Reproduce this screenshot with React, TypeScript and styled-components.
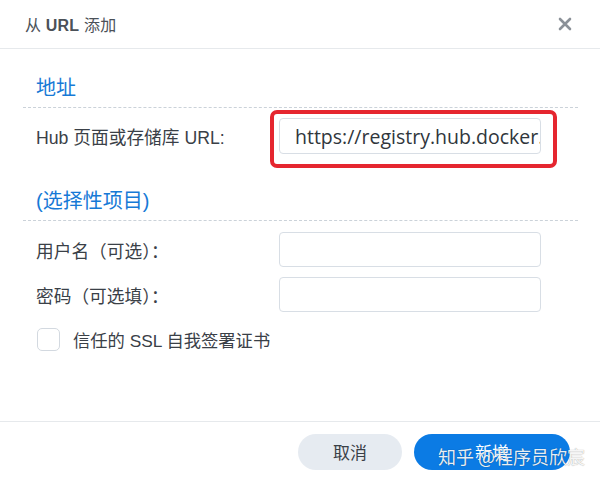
import React from 'react';
import styled, { createGlobalStyle } from 'styled-components';

const GlobalStyle = createGlobalStyle`
  html, body {
    margin: 0;
    padding: 0;
    background: #ffffff;
  }
  body {
    font-family: 'Liberation Sans', 'Noto Sans CJK SC', sans-serif;
    color: #3a4047;
  }
  * {
    box-sizing: border-box;
  }
`;

const Dialog = styled.div`
  position: relative;
  width: 600px;
  height: 482px;
  display: flex;
  flex-direction: column;
  background: #ffffff;
  overflow: hidden;
`;

const Header = styled.div`
  height: 49px;
  flex-shrink: 0;
  display: flex;
  align-items: center;
  justify-content: space-between;
  padding: 0 27px 0 25px;
  border-bottom: 1px solid #e6e9ec;
`;

const Title = styled.div`
  font-size: 16px;
  color: #4b5158;
  letter-spacing: 0.2px;

  b {
    font-weight: 700;
  }
`;

const CloseButton = styled.button`
  width: 16px;
  height: 16px;
  padding: 0;
  border: none;
  background: none;
  display: flex;
  align-items: center;
  justify-content: center;
  cursor: pointer;
`;

const Body = styled.div`
  flex: 1;
  padding: 0 22px 0 23px;
`;

const SectionTitle = styled.div<{ $top: number }>`
  margin-top: ${(p) => p.$top}px;
  padding: 0 0 7px 13px;
  font-size: 20px;
  line-height: 24px;
  color: #1679d6;
  border-bottom: 1px dashed #cbd2d9;
`;

const Row = styled.div<{ $top: number }>`
  margin-top: ${(p) => p.$top}px;
  display: grid;
  grid-template-columns: 243px 262px;
  align-items: center;
  padding-left: 13px;
`;

const Label = styled.label`
  font-size: 17.7px;
  color: #3a4047;
`;

const InputWrap = styled.div`
  position: relative;
`;

const TextInput = styled.input<{ $h: number }>`
  width: 262px;
  height: ${(p) => p.$h}px;
  border: 1px solid #d8dee5;
  border-radius: 4px;
  padding: 0 0 0 15px;
  font-family: 'Open Sans', 'Noto Sans CJK SC', sans-serif;
  font-size: 19.5px;
  color: #30363c;
  background: #ffffff;
  outline: none;
`;

const Highlight = styled.div`
  position: absolute;
  left: -9px;
  top: -8px;
  width: 287px;
  height: 58px;
  border: 4px solid #e5262f;
  border-radius: 7px;
  pointer-events: none;
`;

const CheckRow = styled.label`
  margin-top: 15px;
  display: flex;
  align-items: center;
  gap: 13px;
  padding-left: 14px;
  font-size: 17.3px;
  color: #3a4047;
`;

const CheckBox = styled.span`
  width: 23px;
  height: 23px;
  border: 1px solid #d3d9e0;
  border-radius: 5px;
  background: #ffffff;
`;

const Footer = styled.div`
  height: 61px;
  flex-shrink: 0;
  display: flex;
  align-items: center;
  justify-content: flex-end;
  gap: 12px;
  padding: 0 30px 1px 0;
  border-top: 1px solid #e6e9ec;
`;

const Button = styled.button<{ $primary?: boolean; $w: number }>`
  width: ${(p) => p.$w}px;
  height: 36px;
  border: none;
  border-radius: 18px;
  font-family: 'Liberation Sans', 'Noto Sans CJK SC', sans-serif;
  font-size: 17px;
  background: ${(p) => (p.$primary ? '#0b7be4' : '#e6ebf1')};
  color: ${(p) => (p.$primary ? '#ffffff' : '#3a4047')};
  cursor: pointer;
`;

const Watermark = styled.div`
  position: absolute;
  right: 15px;
  bottom: 13px;
  font-family: 'Noto Sans CJK SC', sans-serif;
  font-size: 18px;
  color: rgba(255, 255, 255, 0.92);
  text-shadow: 0 0 1px rgba(0, 0, 0, 0.45);
  pointer-events: none;
`;

const CloseIcon = () => (
  <svg width="14" height="14" viewBox="0 0 14 14">
    <path d="M2 2 L12 12 M12 2 L2 12" stroke="#8b9198" strokeWidth="2.6" strokeLinecap="round" />
  </svg>
);

export default function App() {
  return (
    <>
      <GlobalStyle />
      <Dialog>
        <Header>
          <Title>
            从 <b>URL</b> 添加
          </Title>
          <CloseButton aria-label="close">
            <CloseIcon />
          </CloseButton>
        </Header>
        <Body>
          <SectionTitle $top={27}>地址</SectionTitle>
          <Row $top={10}>
            <Label>Hub 页面或存储库 URL:</Label>
            <InputWrap>
              <TextInput $h={36} readOnly value="https://registry.hub.docker.com" />
              <Highlight />
            </InputWrap>
          </Row>
          <SectionTitle $top={35}>(选择性项目)</SectionTitle>
          <Row $top={11}>
            <Label>用户名（可选）：</Label>
            <TextInput $h={35} />
          </Row>
          <Row $top={10}>
            <Label>密码（可选填）：</Label>
            <TextInput $h={35} type="password" />
          </Row>
          <CheckRow>
            <CheckBox />
            信任的 SSL 自我签署证书
          </CheckRow>
        </Body>
        <Footer>
          <Button $w={104}>取消</Button>
          <Button $primary $w={156}>新增</Button>
        </Footer>
        <Watermark>知乎 @程序员欣宸</Watermark>
      </Dialog>
    </>
  );
}
